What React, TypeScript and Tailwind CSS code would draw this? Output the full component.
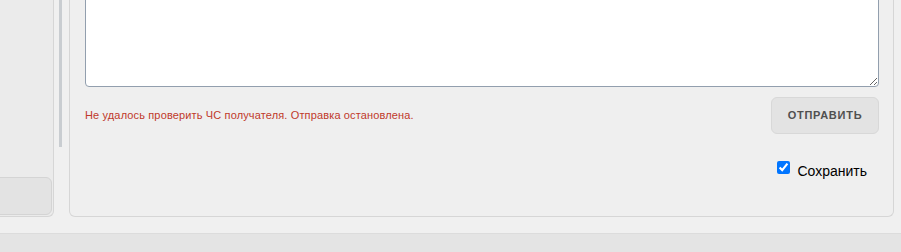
import React from "react";

export default function App() {
  return (
    <div className="w-[901px] h-[252px] flex flex-col bg-[#f0f0f0] overflow-hidden" style={{ fontFamily: '"Liberation Sans", Arial, sans-serif' }}>
      <div className="h-[233px] flex items-start">
        {/* left panel */}
        <div className="w-[54px] h-[217px] bg-[#ebebeb] border-r border-b border-[#d6d6d6] rounded-br-[6px] flex flex-col">
          <div className="mt-auto mb-[1px] -ml-3 w-[64px] h-[38px] bg-[#e3e3e3] border border-[#d4d4d4] rounded-[6px]" />
        </div>
        {/* scrollbar */}
        <div className="ml-[5px] w-[3px] h-[147px] bg-[#c9cdd1]" />
        {/* right panel */}
        <div className="ml-[7px] w-[825px] h-[217px] bg-[#efefef] border-l border-r border-b border-[#d6d6d6] rounded-b-[6px] px-[15px] pr-[14px] flex flex-col">
          <textarea
            className="block -mt-[10px] w-[794px] h-[97px] bg-white border border-[#929fae] rounded-[4px] outline-none"
            defaultValue=""
          />
          <div className="mt-[10px] flex items-center justify-between">
            <div className="text-[11px] tracking-[0.14px] text-[#c0392b] leading-none">Не удалось проверить ЧС получателя. Отправка остановлена.</div>
            <button className="w-[108px] h-[37px] bg-[#e3e3e3] border border-[#d8d8d8] rounded-[6px] text-[11px] font-bold tracking-[0.75px] text-[#505050]">
              ОТПРАВИТЬ
            </button>
          </div>
          <div className="mt-[27px] flex justify-end items-start pr-[12px]">
            <input type="checkbox" defaultChecked className="m-0 w-[13px] h-[13px]" />
            <span className="ml-[7px] mt-[3px] text-[14px] text-black leading-none">Сохранить</span>
          </div>
        </div>
      </div>
      <div className="h-[19px] bg-[#e4e4e4] border-t border-[#dcdcdc]" />
    </div>
  );
}
